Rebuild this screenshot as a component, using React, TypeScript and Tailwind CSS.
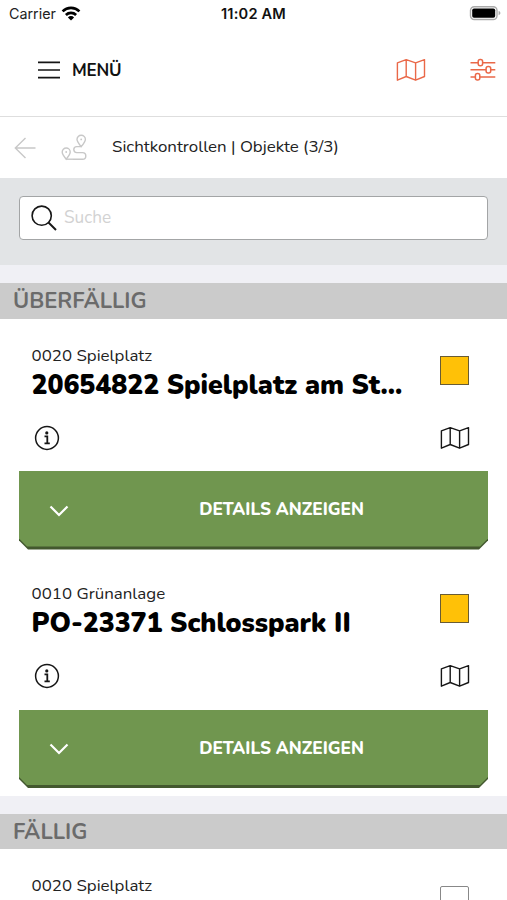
import type { ReactNode } from 'react'
import clsx from 'clsx'

interface InspectionObject {
  category: string
  title?: string
  due: boolean
}

const overdue: InspectionObject[] = [
  { category: '0020 Spielplatz', title: '20654822 Spielplatz am St...', due: true },
  { category: '0010 Grünanlage', title: 'PO-23371 Schlosspark II', due: true },
]

const upcoming: InspectionObject[] = [{ category: '0020 Spielplatz', due: false }]

function MapIcon({ className }: { className?: string }) {
  return (
    <svg
      viewBox="0 0 30 24"
      className={clsx('h-6 w-[30px]', className)}
      fill="none"
      stroke="currentColor"
      strokeWidth="1.4"
      strokeLinejoin="round"
    >
      <path d="M1.4 4.8 10.2 1.6 19.6 4.8 28.5 1.6V18.5L19.6 22.2 10.2 18.5 1.4 22.2ZM10.2 1.6V18.5M19.6 4.8V22.2" />
    </svg>
  )
}

function SlidersIcon() {
  return (
    <svg viewBox="0 0 26 24" className="h-6 w-[26px]" fill="none" stroke="currentColor" strokeWidth="1.5">
      <path d="M.5 4.7H8M13 4.7H25.3M.5 11.8H16M21 11.8H25.3M.5 18.9H5.5M10 18.9H25.3" />
      <rect x="8.2" y="1.4" width="4.4" height="6.4" rx="2" />
      <rect x="16.1" y="8.5" width="4.6" height="6.4" rx="2" />
      <rect x="5.4" y="15.6" width="4.4" height="6.4" rx="2" />
    </svg>
  )
}

function RouteIcon() {
  return (
    <svg viewBox="0 0 28 28" className="size-7" fill="none" stroke="currentColor" strokeWidth="1.4">
      <path d="M20.2 12.6C17.6 9.4 16 7.4 16 5.4a4.2 4.2 0 0 1 8.4 0C24.4 7.4 22.8 9.4 20.2 12.6ZM5.2 25.2C2.6 22 1.2 20 1.2 18a4 4 0 0 1 8 0C9.2 20 7.8 22 5.2 25.2Z" />
      <path d="M20.2 12.6H15.8a3 3 0 0 0 0 6H21.5a3.3 3.3 0 0 1 0 6.6H12" />
      <circle cx="20.2" cy="5.4" r=".9" fill="currentColor" stroke="none" />
      <circle cx="5.2" cy="18" r=".9" fill="currentColor" stroke="none" />
      <path d="M5.2 25.2H12" />
    </svg>
  )
}

function InfoIcon() {
  return (
    <svg viewBox="0 0 26 26" className="size-[26px]" fill="none" stroke="currentColor">
      <circle cx="13" cy="13" r="11.4" strokeWidth="1.5" />
      <circle cx="12.8" cy="7.9" r="1.6" fill="currentColor" stroke="none" />
      <path d="M10.5 11.4H13.3V18M10.5 18.3H15.8" strokeWidth="1.8" />
    </svg>
  )
}

function StatusBar() {
  return (
    <div className="grid h-7 grid-cols-3 items-center px-[9px] font-['Inter','Liberation_Sans',sans-serif] text-[14.3px] text-[#111]">
      <div className="flex items-center gap-1.5">
        <span className="text-[#222]">Carrier</span>
        <svg viewBox="0 0 20 15" className="-ml-px mb-0.5 h-[15px] w-5" fill="none" stroke="#000" strokeWidth="2.7">
          <path d="M1.6 5.4A12 12 0 0 1 18.4 5.4M4.9 9A7.3 7.3 0 0 1 15.1 9" />
          <path d="M10 14.5 6.9 11.4A4.4 4.4 0 0 1 13.1 11.4Z" fill="#000" stroke="none" />
        </svg>
      </div>
      <span className="pt-px text-center text-[14.6px] font-semibold tracking-[0.2px]">11:02 AM</span>
      <svg viewBox="0 0 32 16" className="-mr-[3px] mb-0.5 h-4 w-8 justify-self-end">
        <rect x="1.5" y="1.7" width="26.5" height="12.8" rx="3.8" fill="#fff" stroke="#aaa" strokeWidth="1.4" />
        <rect x="3.2" y="3.4" width="23" height="9.4" rx="1.8" />
        <path d="M29.6 6v4.2c1.2-.4 1.8-1.2 1.8-2.1s-.6-1.7-1.8-2.1Z" fill="#aaa" />
      </svg>
    </div>
  )
}

function TopBar() {
  return (
    <header className="flex h-[89px] items-center border-b border-[#dedede] pr-[11px] pb-1 pl-[37px]">
      <svg viewBox="0 0 24 20" className="h-5 w-6" stroke="#151515" strokeWidth="1.7">
        <path d="M1 2.3H23M1 10H23M1 17.7H23" />
      </svg>
      <span className="ml-[11px] pt-0.5 text-[17px] font-bold tracking-[-0.2px]">MENÜ</span>
      <MapIcon className="mr-11 ml-auto text-[#ea6848]" />
      <span className="text-[#ea6848]">
        <SlidersIcon />
      </span>
    </header>
  )
}

function Breadcrumb() {
  return (
    <div className="flex h-[61px] items-center pl-3.5">
      <svg viewBox="0 0 22 22" className="size-[22px] text-[#c8c8c8]" fill="none" stroke="currentColor" strokeWidth="1.4">
        <path d="M21.5 11H1.3M11.5 1 1.3 11 11.5 21" />
      </svg>
      <span className="ml-[25px] text-[#c8c8c8]">
        <RouteIcon />
      </span>
      <span className="mb-0.5 ml-[23px] text-[16.9px] whitespace-nowrap text-[#222]">
        Sichtkontrollen | Objekte (3/3)
      </span>
    </div>
  )
}

function SearchBar() {
  return (
    <div className="h-[87px] bg-[#e2e4e6] px-[19px] pt-[18px]">
      <div className="flex h-11 items-center rounded-[4px] border-[1.5px] border-[#a3a5a6] bg-white pl-[11px]">
        <svg viewBox="0 0 26 26" className="size-[26px]" fill="none" stroke="#171717">
          <circle cx="10.7" cy="10.7" r="9.6" strokeWidth="1.6" />
          <path d="M17.5 17.5 25 25" strokeWidth="2" />
        </svg>
        <input
          placeholder="Suche"
          className="ml-[7px] min-w-0 flex-1 text-[17.2px] outline-none placeholder:text-[#d2d2d2]"
        />
      </div>
    </div>
  )
}

function ObjectCard({ category, title, due }: InspectionObject) {
  return (
    <article className="h-[238.5px] px-[19px] pt-6">
      <div className="flex h-[128.5px] flex-col pr-[19px] pl-[12.5px]">
        <div className="flex justify-between">
          <div className="pt-px">
            <div className="h-6 text-[16.9px] leading-6 whitespace-nowrap text-[#222]">{category}</div>
            {title && (
              <h3 className="h-9 text-[26.6px] leading-[35px] font-black whitespace-nowrap text-black">{title}</h3>
            )}
          </div>
          <span
            className={clsx(
              'mt-[13px] size-[29px] shrink-0 border',
              due ? 'border-[#695c34] bg-[#ffc107]' : 'rounded-[2px] border-[#888] bg-white',
            )}
          />
        </div>
        <div className="-mr-[0.5px] mt-[21px] flex items-center justify-between text-[#161616]">
          <span className="ml-0.5">
            <InfoIcon />
          </span>
          <MapIcon />
        </div>
      </div>
      {title && <DetailsButton>DETAILS ANZEIGEN</DetailsButton>}
    </article>
  )
}

function DetailsButton({ children }: { children: ReactNode }) {
  return (
    <button className="block h-[78.5px] w-full bg-[#43582f] text-white [clip-path:polygon(0_0,100%_0,100%_calc(100%-9px),calc(100%-9px)_100%,9px_100%,0_calc(100%-9px))]">
      <span className="flex h-full items-center bg-[#70964f] [clip-path:polygon(0_0,100%_0,100%_calc(100%-11px),calc(100%-8px)_calc(100%-3px),8px_calc(100%-3px),0_calc(100%-11px))]">
        <svg viewBox="0 0 20 12" className="mt-px ml-[30px] h-3 w-5" fill="none" stroke="currentColor" strokeWidth="2.2">
          <path d="M1.5 1.5 10 10 18.5 1.5" />
        </svg>
        <span className="mr-1 flex-1 pl-2.5 text-center text-[17.2px] font-extrabold whitespace-nowrap">
          {children}
        </span>
      </span>
    </button>
  )
}

function Section({ title, items }: { title: string; items: InspectionObject[] }) {
  return (
    <section>
      <div className="h-[18px] bg-[#f0f0f5]" />
      <h2 className="flex h-[35.5px] items-center bg-[#cbcbcb] pt-0.5 pl-[13px] text-[21.9px] font-bold text-[#6b6b6b]">
        {title}
      </h2>
      {items.map((item, i) => (
        <ObjectCard key={i} {...item} />
      ))}
    </section>
  )
}

export default function App() {
  return (
    <main className="h-[900px] w-full overflow-hidden bg-white font-['Nunito','Open_Sans','Noto_Sans',sans-serif] text-[#111]">
      <StatusBar />
      <TopBar />
      <Breadcrumb />
      <SearchBar />
      <Section title="ÜBERFÄLLIG" items={overdue} />
      <Section title="FÄLLIG" items={upcoming} />
    </main>
  )
}
